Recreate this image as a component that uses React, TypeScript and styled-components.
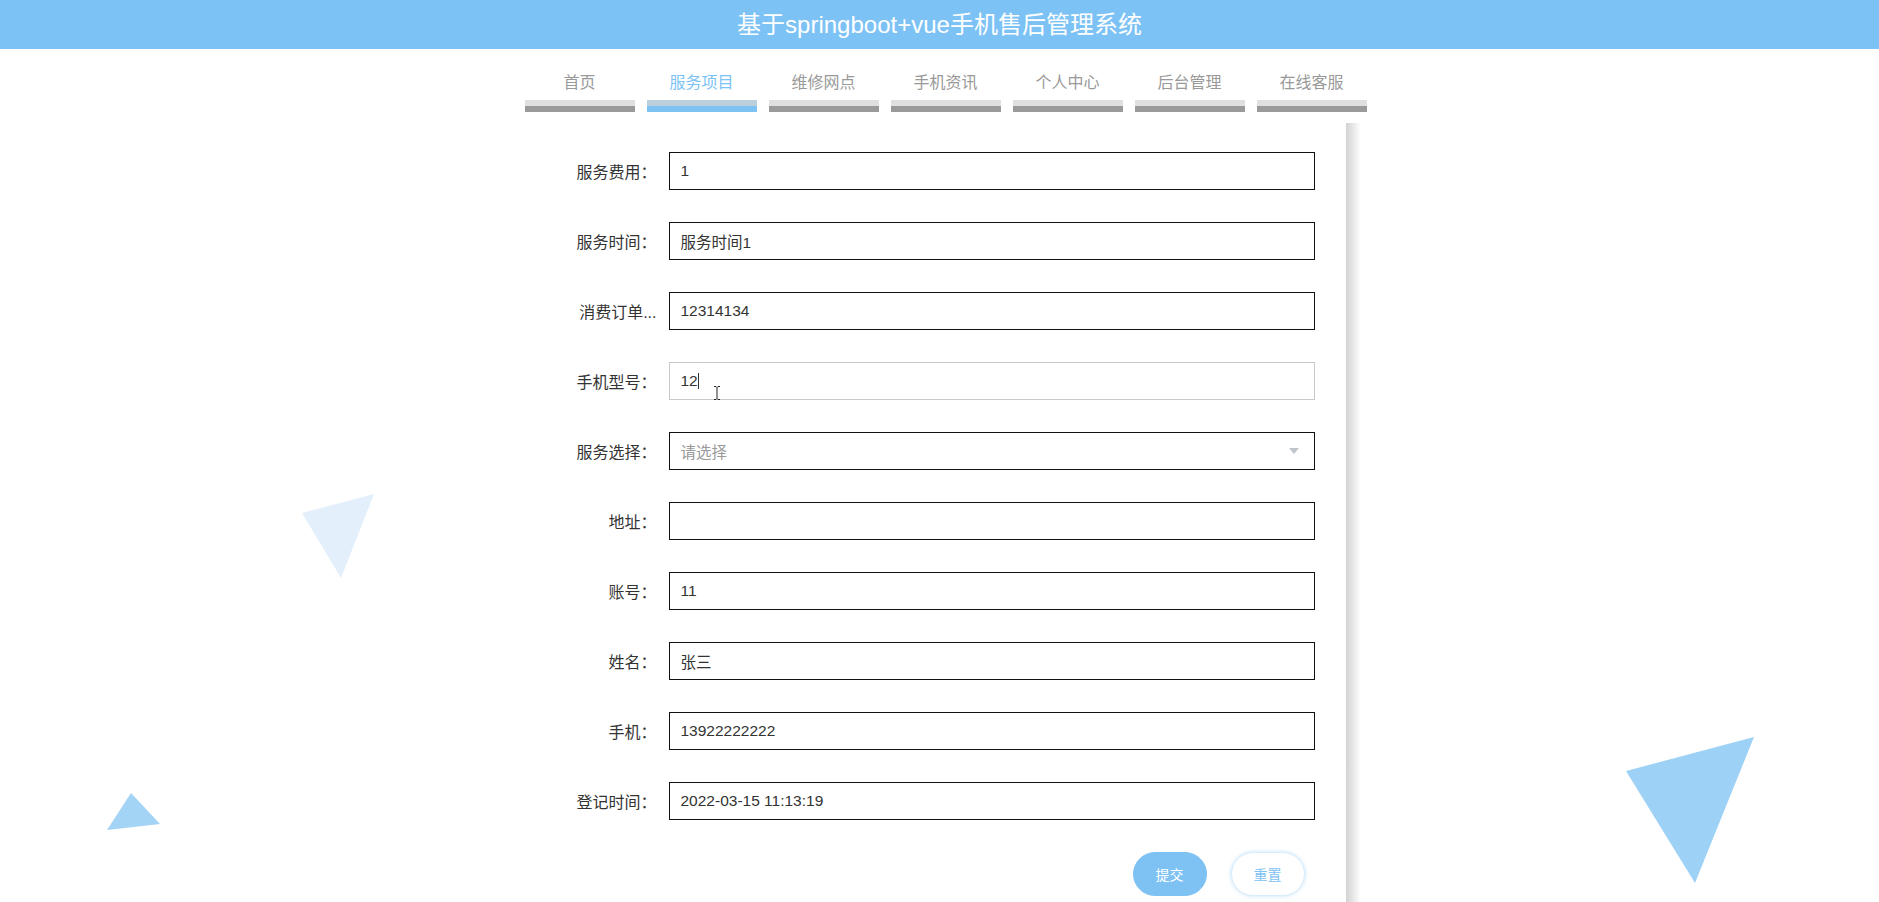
import React from "react";
import styled, { createGlobalStyle } from "styled-components";

const GlobalStyle = createGlobalStyle`
    html, body {
        margin: 0;
        padding: 0;
        overflow: hidden;
        background: #fff;
        font-family: "Liberation Sans", "Noto Sans CJK SC", sans-serif;
    }
`
const Page = styled.div`
    position: relative;
    height: 902px;
    overflow: hidden;
`
const Header = styled.header`
    height: 49px;
    line-height: 49px;
    background-color: #7dc2f5;
    color: #fff;
    text-align: center;
    font-size: 24px;
`
const Main = styled.div`
    width: 842px;
    margin-left: calc(50% - 415px);
`
const Nav = styled.nav`
    display: flex;
    gap: 12px;
    padding-top: 23px;
`
const NavItem = styled.div<{ $active?: boolean }>`
    width: 110px;
    display: flex;
    flex-direction: column;
    align-items: center;
    font-size: 16px;
    line-height: 22px;
    color: ${(p) => (p.$active ? "#7dc2f5" : "#999")};
    cursor: pointer;
`
const NavBar = styled.span<{ $active?: boolean }>`
    align-self: stretch;
    margin-top: 6px;
    height: 6px;
    background-color: ${(p) => (p.$active ? "#bccfdd" : "#e0e0e0")};
    border-bottom: 6px solid ${(p) => (p.$active ? "#7ec2f4" : "#9a9a9a")};
`
/* the grey strip down the right side of the form */
const FormBox = styled.form`
    margin-top: 11px;
    width: 821px;
    min-height: 800px;
    padding-top: 29px;
    padding-right: 15px;
    background: linear-gradient(to right, #d3d3d3, #e6e6e6 45%, #ffffff) right top / 15px 100% no-repeat;
`
const Row = styled.div`
    display: flex;
    align-items: center;
    height: 38px;
    margin-bottom: 32px;
    padding-left: 52px;
`
const Label = styled.label`
    width: 80px;
    padding-right: 12px;
    text-align: right;
    font-size: 16px;
    color: #333;
    white-space: nowrap;
`
const Field = styled.div`
    position: relative;
    width: 646px;
    height: 38px;
`
const Input = styled.input<{ $soft?: boolean }>`
    box-sizing: border-box;
    width: 100%;
    height: 38px;
    padding: 0 11px;
    border: 1px solid ${(p) => (p.$soft ? "#c9c9c9" : "#111")};
    border-radius: 0;
    outline: none;
    font-family: inherit;
    font-size: 15.5px;
    color: #333;
    background: #fff;
`
const Caret = styled.span`
    position: absolute;
    left: 29px;
    top: 11px;
    width: 1px;
    height: 16px;
    background: #333;
`
const Pointer = styled.svg`
    position: absolute;
    left: 44px;
    top: 23px;
`
const SelectBox = styled.div`
    box-sizing: border-box;
    height: 38px;
    padding: 0 14px 0 11px;
    border: 1px solid #111;
    display: flex;
    align-items: center;
    justify-content: space-between;
    font-size: 15.5px;
    color: #999;
    cursor: pointer;
`
const Arrow = styled.span`
    width: 0;
    height: 0;
    margin-right: 1px;
    border-left: 5px solid transparent;
    border-right: 5px solid transparent;
    border-top: 6px solid #c0c4cc;
`
const ButtonRow = styled.div`
    display: flex;
    justify-content: flex-end;
    gap: 24px;
    width: 780px;
`
const Button = styled.button<{ $primary?: boolean }>`
    width: 74px;
    height: 44px;
    border-radius: 22px;
    font-family: inherit;
    font-size: 14px;
    cursor: pointer;
    background: ${(p) => (p.$primary ? "#7ec2f4" : "#fff")};
    color: ${(p) => (p.$primary ? "#fff" : "#7ec2f4")};
    border: 1px solid ${(p) => (p.$primary ? "#7ec2f4" : "#d8edfc")};
    box-shadow: ${(p) => (p.$primary ? "none" : "0 0 4px #c4e2f9")};
`
const Deco = styled.svg`
    position: absolute;
    left: 0;
    top: 0;
    pointer-events: none;
`

const navs = ["首页", "服务项目", "维修网点", "手机资讯", "个人中心", "后台管理", "在线客服"];

const fields: { label: string; value: string }[] = [
  { label: "服务费用：", value: "1" },
  { label: "服务时间：", value: "服务时间1" },
  { label: "消费订单...", value: "12314134" },
];
const fields2: { label: string; value: string }[] = [
  { label: "地址：", value: "" },
  { label: "账号：", value: "11" },
  { label: "姓名：", value: "张三" },
  { label: "手机：", value: "13922222222" },
  { label: "登记时间：", value: "2022-03-15 11:13:19" },
];

const App: React.FC = () => {
  return (
    <Page>
      <GlobalStyle />
      <Deco width="1879" height="902">
        <polygon points="302,513 374,494 341,578" fill="#e3f0fb" />
        <polygon points="131,793 160,824 107,830" fill="#a3d3f5" />
        <polygon points="1626,771 1754,737 1695,883" fill="#9dd1f5" />
      </Deco>
      <Header>基于springboot+vue手机售后管理系统</Header>
      <Main>
        <Nav>
          {navs.map((n) => (
            <NavItem key={n} $active={n === "服务项目"}>
              {n}
              <NavBar $active={n === "服务项目"} />
            </NavItem>
          ))}
        </Nav>

        <FormBox onSubmit={(e) => e.preventDefault()}>
          {fields.map((f) => (
            <Row key={f.label}>
              <Label>{f.label}</Label>
              <Field>
                <Input defaultValue={f.value} />
              </Field>
            </Row>
          ))}

          <Row>
            <Label>手机型号：</Label>
            <Field>
              <Input $soft defaultValue="12" />
              <Caret />
              <Pointer width="8" height="16" viewBox="0 0 8 16">
                <path d="M1 1.5h2l1 1 1-1h2M4 2.5v11M1 14.5h2l1-1 1 1h2" stroke="#222" strokeWidth="1" fill="none" />
              </Pointer>
            </Field>
          </Row>

          <Row>
            <Label>服务选择：</Label>
            <Field>
              <SelectBox>
                <span>请选择</span>
                <Arrow />
              </SelectBox>
            </Field>
          </Row>

          {fields2.map((f) => (
            <Row key={f.label}>
              <Label>{f.label}</Label>
              <Field>
                <Input defaultValue={f.value} />
              </Field>
            </Row>
          ))}

          <ButtonRow>
            <Button $primary type="submit">提交</Button>
            <Button type="reset">重置</Button>
          </ButtonRow>
        </FormBox>
      </Main>
    </Page>
  );
};

export default App;
